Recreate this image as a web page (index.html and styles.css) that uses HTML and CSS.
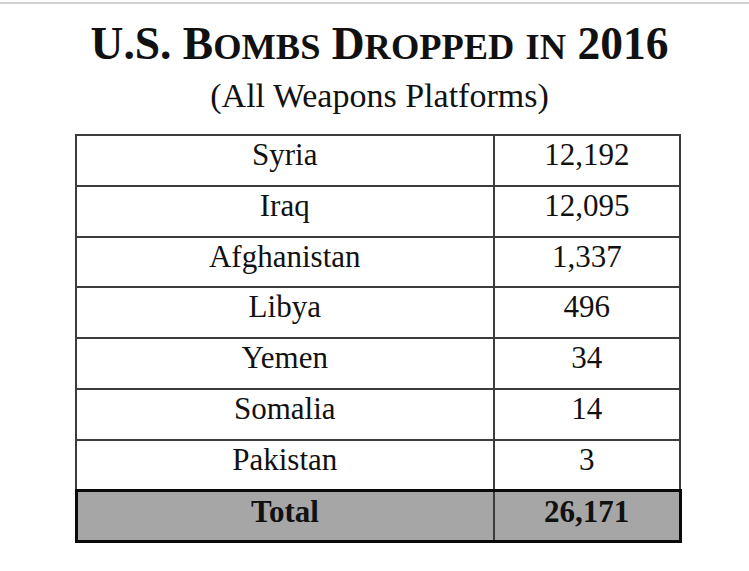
FILE: index.html
```html
<!DOCTYPE html>
<html lang="en">
<head>
<meta charset="utf-8">
<title>U.S. Bombs Dropped in 2016</title>
<link rel="stylesheet" href="styles.css">
</head>
<body>
<div class="topline"></div>
<main class="page">
  <h1 class="title">U.S. B<span class="sc">OMBS</span> D<span class="sc">ROPPED</span> <span class="sc">IN</span> 2016</h1>
  <p class="subtitle">(All Weapons Platforms)</p>
  <table class="bombs">
    <tbody>
      <tr><td class="country">Syria</td><td class="count">12,192</td></tr>
      <tr><td class="country">Iraq</td><td class="count">12,095</td></tr>
      <tr><td class="country">Afghanistan</td><td class="count">1,337</td></tr>
      <tr><td class="country">Libya</td><td class="count">496</td></tr>
      <tr><td class="country">Yemen</td><td class="count">34</td></tr>
      <tr><td class="country">Somalia</td><td class="count">14</td></tr>
      <tr><td class="country">Pakistan</td><td class="count">3</td></tr>
      <tr class="total"><td class="country">Total</td><td class="count">26,171</td></tr>
    </tbody>
  </table>
</main>
</body>
</html>
```

FILE: styles.css
```css
html, body {
  margin: 0;
  padding: 0;
  background: #ffffff;
}

body {
  font-family: "Liberation Serif", "Times New Roman", serif;
  color: #111111;
}

.topline {
  margin-top: 2px;
  height: 2px;
  background: #d2d2d2;
}

.page {
  padding-left: 7px;
  display: flex;
  flex-direction: column;
  align-items: center;
}

.title {
  margin: 15px 0 0 0;
  font-size: 45.5px;
  line-height: 50px;
  font-weight: bold;
  text-align: center;
  letter-spacing: 0;
  padding-left: 3px;
}

.sc {
  font-size: 0.8em;
}

.subtitle {
  margin: 4px 0 0 0;
  font-size: 34px;
  line-height: 40px;
  text-align: center;
  padding-left: 3px;
}

.bombs {
  margin-top: 18px;
  border-collapse: collapse;
  width: 607px;
}

.bombs td {
  border: 2px solid #3c3c3c;
  height: 46.75px;
  padding: 2px 0 0 0;
  vertical-align: top;
  text-align: center;
  font-size: 31px;
  line-height: 34px;
}

.bombs td.country {
  width: 415px;
}

.total td {
  height: 45px;
  background: #a6a6a6;
  font-weight: bold;
  border-top: 3px solid #0a0a0a;
  border-bottom: 3px solid #0a0a0a;
  padding-top: 3px;
}

.total td:first-child {
  border-left: 3px solid #0a0a0a;
}

.total td:last-child {
  border-right: 3px solid #0a0a0a;
}
```
